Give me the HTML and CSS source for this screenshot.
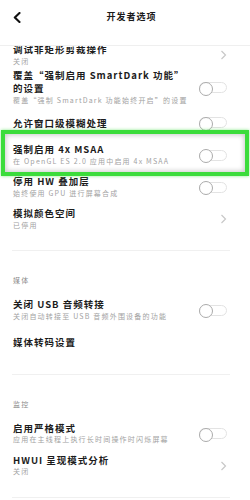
FILE: index.html
```html
<!DOCTYPE html>
<html lang="zh-CN">
<head>
<meta charset="utf-8">
<title>开发者选项</title>
<link rel="stylesheet" href="styles.css">
</head>
<body>
<div class="screen">
  <header class="topbar">
    <span class="topbar__back">
      <svg width="8" height="11" viewBox="0 0 8 11"><path d="M6.5 1 L1.8 5.5 L6.5 10" fill="none" stroke="#111" stroke-width="2.1" stroke-linecap="round" stroke-linejoin="round"/></svg>
    </span>
    <h1 class="topbar__title">开发者选项</h1>
    <span></span>
  </header>

  <main class="list">
    <div class="list__inner">
      <div class="row">
        <div class="row__text">
          <div class="row__title">调试非矩形剪裁操作</div>
          <div class="row__sub">关闭</div>
        </div>
        <span class="row__ctrl"><svg class="chev" width="7" height="10" viewBox="0 0 7 10"><path d="M1.5 1 L5.5 5 L1.5 9" fill="none" stroke="#c8c8c8" stroke-width="1.2"/></svg></span>
      </div>

      <div class="row row--wrap">
        <div class="row__text">
          <div class="row__title">覆盖“强制启用 SmartDark 功能”<br>的设置</div>
          <div class="row__sub">覆盖“强制 SmartDark 功能始终开启”的设置</div>
        </div>
        <span class="row__ctrl"><span class="toggle"></span></span>
      </div>

      <div class="row row--single">
        <div class="row__text">
          <div class="row__title">允许窗口级模糊处理</div>
        </div>
        <span class="row__ctrl"><span class="toggle"></span></span>
      </div>

      <div class="row row--focus">
        <div class="row__text">
          <div class="row__title">强制启用 4x MSAA</div>
          <div class="row__sub">在 OpenGL ES 2.0 应用中启用 4x MSAA</div>
        </div>
        <span class="row__ctrl"><span class="toggle"></span></span>
      </div>

      <div class="row">
        <div class="row__text">
          <div class="row__title">停用 HW 叠加层</div>
          <div class="row__sub">始终使用 GPU 进行屏幕合成</div>
        </div>
        <span class="row__ctrl"><span class="toggle"></span></span>
      </div>

      <div class="row">
        <div class="row__text">
          <div class="row__title">模拟颜色空间</div>
          <div class="row__sub">已停用</div>
        </div>
        <span class="row__ctrl"><svg class="chev" width="7" height="10" viewBox="0 0 7 10"><path d="M1.5 1 L5.5 5 L1.5 9" fill="none" stroke="#c8c8c8" stroke-width="1.2"/></svg></span>
      </div>

      <div class="divider"></div>
      <div class="section">媒体</div>

      <div class="row">
        <div class="row__text">
          <div class="row__title">关闭 USB 音频转接</div>
          <div class="row__sub">关闭自动转接至 USB 音频外围设备的功能</div>
        </div>
        <span class="row__ctrl"><span class="toggle"></span></span>
      </div>

      <div class="row row--single">
        <div class="row__text">
          <div class="row__title">媒体转码设置</div>
        </div>
      </div>

      <div class="divider"></div>
      <div class="section">监控</div>

      <div class="row">
        <div class="row__text">
          <div class="row__title">启用严格模式</div>
          <div class="row__sub">应用在主线程上执行长时间操作时闪烁屏幕</div>
        </div>
        <span class="row__ctrl"><span class="toggle"></span></span>
      </div>

      <div class="row">
        <div class="row__text">
          <div class="row__title">HWUI 呈现模式分析</div>
          <div class="row__sub">关闭</div>
        </div>
        <span class="row__ctrl"><svg class="chev" width="7" height="10" viewBox="0 0 7 10"><path d="M1.5 1 L5.5 5 L1.5 9" fill="none" stroke="#c8c8c8" stroke-width="1.2"/></svg></span>
      </div>

      <div class="divider"></div>
    </div>
  </main>
</div>
</body>
</html>
```

FILE: styles.css
```css
* {
  box-sizing: border-box;
  margin: 0;
  padding: 0;
}

html, body {
  width: 250px;
  height: 500px;
  overflow: hidden;
  background: #fff;
}

body {
  font-family: "Noto Sans CJK SC", "Noto Sans", sans-serif;
  color: #1f1f1f;
}

.screen {
  width: 250px;
  height: 500px;
  display: flex;
  flex-direction: column;
}

.topbar {
  flex: none;
  display: grid;
  grid-template-columns: 1fr auto 1fr;
  align-items: center;
  height: 46px;
  padding: 0 0 11px 13px;
  border-bottom: 1px solid #efefef;
  background: #fff;
}

.topbar__back svg {
  display: block;
}

.topbar__title {
  font-size: 9px;
  line-height: 12px;
  font-weight: 700;
  letter-spacing: 1px;
  color: #1a1a1a;
  text-align: center;
}

.list {
  flex: 1;
  overflow: hidden;
}

.list__inner {
  margin-top: -7px;
}

.row {
  display: flex;
  align-items: center;
  padding: 4px 23px 4px 13px;
}

.row__text {
  flex: 1;
  min-width: 0;
}

.row__title {
  font-size: 9.5px;
  line-height: 12.5px;
  font-weight: 700;
  letter-spacing: 1px;
  white-space: nowrap;
  color: #1c1c1c;
}

.row__sub {
  font-size: 7px;
  line-height: 11.5px;
  letter-spacing: 1.2px;
  color: #a2a2a2;
  white-space: nowrap;
}

.row__ctrl {
  flex: none;
  width: 29px;
  display: flex;
  justify-content: flex-end;
  align-items: center;
}

.row--single {
  padding-top: 10px;
  padding-bottom: 10px;
}

.row--wrap {
  margin-top: -3px;
  padding-top: 1px;
  padding-bottom: 0;
}

.row--wrap .row__title {
  line-height: 13px;
}

.row--focus {
  position: relative;
}

.row--focus::after {
  content: "";
  position: absolute;
  top: -9px;
  bottom: -5px;
  left: 1px;
  right: 1px;
  border: 4px solid #3bdc3b;
  box-shadow: inset 0 0 5px 1px rgba(0, 0, 0, 0.22), 0 0 3px rgba(59, 220, 59, 0.6);
  pointer-events: none;
}

.toggle {
  position: relative;
  display: block;
  width: 28px;
  height: 11px;
  border: 1px solid #e3e3e3;
  border-radius: 6px;
  background: #fff;
}

.toggle::before {
  content: "";
  position: absolute;
  left: -1px;
  top: -1.5px;
  width: 12px;
  height: 12px;
  border: 1.5px solid #ababab;
  border-radius: 50%;
  background: #fff;
}

.chev {
  display: block;
}

.divider {
  height: 1px;
  background: #f0f0f0;
  margin: 15px 20px 0 12px;
}

.section {
  font-size: 7px;
  line-height: 12px;
  letter-spacing: 1.2px;
  color: #8a8a8a;
  padding: 23px 13px 8px;
}
```
